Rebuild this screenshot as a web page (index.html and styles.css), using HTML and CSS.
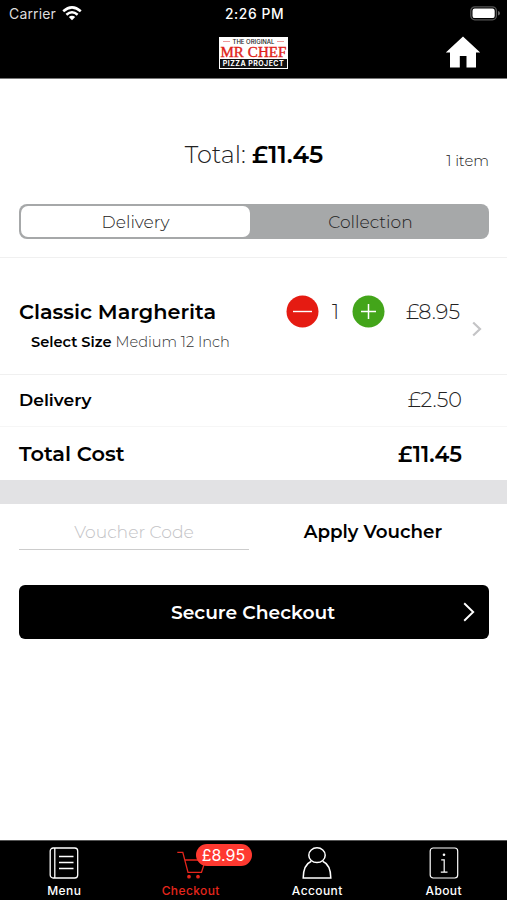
FILE: index.html
```html
<!DOCTYPE html>
<html lang="en">
<head>
<meta charset="utf-8">
<title>Checkout</title>
<link rel="stylesheet" href="styles.css">
</head>
<body>
<div class="app">
  <header class="header">
    <div class="status">
      <div class="carrier"><span>Carrier</span>
        <svg width="20" height="15" viewBox="0 0 20 15" fill="none" stroke="#fff" stroke-width="2.5"><path d="M1.2 5.3Q10-2.6 18.8 5.3M4.4 8.7Q10 3.8 15.6 8.7"/><path d="M6.8 10.9Q10 8.4 13.2 10.9L10 14.2Z" fill="#fff" stroke="none"/></svg>
      </div>
      <span class="time">2:26 PM</span>
      <svg class="battery" width="31" height="15" viewBox="0 0 31 15"><rect x=".8" y=".8" width="25.6" height="13" rx="4" fill="none" stroke="#555" stroke-width="1.3"/><rect x="2.5" y="2.5" width="22.2" height="9.6" rx="2.2" fill="#fff"/><path d="M28 5q2 .5 2 2.3T28 9.6z" fill="#666"/></svg>
    </div>
    <div class="brandbar">
      <div class="logo">
        <div class="logo-top"><i></i><span>THE ORIGINAL</span><i></i></div>
        <div class="logo-mid">MR CHEF</div>
        <div class="logo-bottom">PIZZA PROJECT</div>
      </div>
      <svg class="home" width="36" height="32" viewBox="0 0 36 32" fill="#fff"><path d="M18 .5 35.2 16.5H31V31.5H21.5V20H14.8V31.5H5V16.5H.8Z"/></svg>
    </div>
  </header>

  <main class="main">
    <section class="summary">
      <div class="total-line"><div class="total"><span class="total-label">Total:</span><b>£11.45</b></div><span class="count">1 item</span></div>
      <div class="segmented"><div class="segment selected"><span>Delivery</span></div><div class="segment collection"><span>Collection</span></div></div>
    </section>
    <section class="item">
      <div class="item-info">
        <div class="item-name">Classic Margherita</div>
        <div class="item-option"><b>Select Size</b><span>Medium 12 Inch</span></div>
      </div>
      <div class="stepper">
        <svg width="33" height="33" viewBox="0 0 33 33"><circle cx="16.5" cy="16.5" r="16" fill="#e51b12"/><path d="M7 16.5h19" stroke="#fff" stroke-width="1.4"/></svg>
        <span class="quantity">1</span>
        <svg width="33" height="33" viewBox="0 0 33 33"><circle cx="16.5" cy="16.5" r="16" fill="#43a51a"/><path d="M9 16.5h15M16.5 9v15" stroke="#fff" stroke-width="1.5"/></svg>
      </div>
      <div class="amount light item-amount">£8.95</div>
      <svg class="chevron" width="10" height="16" viewBox="0 0 10 16" fill="none" stroke="#c4c4c6" stroke-width="2.2"><path d="M1.2 1.5 8 8 1.2 14.5"/></svg>
    </section>
    <section class="row row-first"><span class="row-delivery">Delivery</span><span class="amount light">£2.50</span></section>
    <section class="row row-last"><span class="row-total">Total Cost</span><span class="amount total-amount">£11.45</span></section>
    <div class="band"></div>
    <section class="voucher"><div class="voucher-input"><span>Voucher Code</span></div><div class="voucher-apply"><span>Apply Voucher</span></div></section>
    <div class="checkout"><span>Secure Checkout</span><svg width="12" height="20" viewBox="0 0 12 20" fill="none" stroke="#fff" stroke-width="1.9"><path d="M1.2 1.2 10.2 10 1.2 18.8"/></svg></div>
  </main>

  <nav class="tabs">
    <div class="tab">
      <svg width="32" height="34" viewBox="0 0 32 34" fill="none" stroke="#fff" stroke-width="1.3"><rect x="2.2" y="2" width="27.5" height="30" rx="3"/><path d="M6.8 2v30M11 10.5h14.5M11 16.5h14.5M11 22.5h14.5"/></svg>
      <span>Menu</span>
    </div>
    <div class="tab active">
      <svg width="32" height="34" viewBox="0 0 32 34" fill="none" stroke="#e5261c" stroke-width="1.3"><path d="M2.3 6.3h5.5L13 26.3h13.5L30.5 14H9.8"/><circle cx="14" cy="30.7" r="1.2" fill="#e5261c"/><circle cx="23" cy="30.7" r="1.2" fill="#e5261c"/></svg>
      <span>Checkout</span>
      <div class="badge">£8.95</div>
    </div>
    <div class="tab">
      <svg width="32" height="34" viewBox="0 0 32 34" fill="none" stroke="#fff" stroke-width="1.5"><ellipse cx="16" cy="9.2" rx="8.2" ry="7.4"/><path d="M10.3 15.2C5 17.5 2.3 22.5 2.2 32H29.8C29.7 22.5 27 17.5 21.7 15.2"/></svg>
      <span>Account</span>
    </div>
    <div class="tab">
      <svg width="32" height="34" viewBox="0 0 32 34" fill="none" stroke="#fff" stroke-width="1.2"><rect x="2.2" y="2" width="27.5" height="30" rx="3"/><path d="M13.2 13.8h3v12M12.8 26.2h6.7"/><circle cx="16" cy="8.8" r="1.3" fill="#fff" stroke="none"/></svg>
      <span>About</span>
    </div>
  </nav>
</div>
</body>
</html>
```
FILE: styles.css
```css
* { box-sizing: border-box; }
body { margin: 0; background: #fff; }
svg { display: block; flex: none; }
.app {
  width: 507px;
  height: 900px;
  display: flex;
  flex-direction: column;
  font-family: Montserrat, Inter, sans-serif;
  color: #000;
  white-space: nowrap;
  overflow: hidden;
}
.header { height: 79px; background: #000; color: #fff; border-bottom: 1px solid #777; flex: none; }
.status { height: 28px; padding: 0 6px 0 9px; display: grid; grid-template-columns: 1fr auto 1fr; align-items: center; font-family: Inter, sans-serif; font-size: 14px; }
.carrier { display: flex; gap: 6px; align-items: center; letter-spacing: .15px; color: #ddd; }
.carrier span { position: relative; top: -1px; }
.carrier svg { margin-top: -1px; }
.time { font-weight: 500; font-size: 13.8px; letter-spacing: .6px; margin-left: -1px; }
.battery { justify-self: end; margin: -2px 0 0 0; }
.brandbar { display: grid; grid-template-columns: 1fr 69px 1fr; height: 50px; padding: 8px 26px 0; align-items: start; }
.logo { grid-column: 2; height: 32px; background: #fff; border: 1px solid #fff; color: #222; display: flex; flex-direction: column; text-align: center; margin-top: 1px; }
.logo-top { height: 7px; display: flex; align-items: center; justify-content: center; gap: 2px; font: 500 6px/7px Inter, sans-serif; }
.logo-top i { width: 7px; height: 1px; background: #e99; }
.logo-mid { height: 14px; color: #e01f18; font: 15px/14px "Liberation Serif", serif; letter-spacing: .1px; -webkit-text-stroke: .4px #e01f18; }
.logo-bottom { height: 9px; background: #111; color: #fff; font: 700 7px/9px Inter, sans-serif; letter-spacing: .45px; }
.home { grid-column: 3; justify-self: end; margin-top: -.5px; }
.main { flex: 1; min-height: 0; }
.summary { height: 179px; padding: 56px 18px 0 19px; border-bottom: 1px solid #f0f0f0; }
.total-line { display: grid; grid-template-columns: 1fr auto 1fr; height: 40px; line-height: 40px; }
.total { grid-column: 2; font-size: 24px; display: flex; gap: 6px; }
.total-label { font-weight: 300; color: #222; }
.total b { font-weight: 600; font-size: 24.3px; line-height: 39px; }
.count { justify-self: end; font-size: 14.8px; font-weight: 300; line-height: 52px; color: #222; }
.segmented { margin-top: 29px; height: 35px; border-radius: 8px; background: #a6a8a9; padding: 2px; display: flex; }
.segment { flex: 1; display: flex; align-items: center; justify-content: center; font-size: 17.1px; font-weight: 300; border-radius: 7px; color: #222; }
.selected { background: #fff; flex: 0 0 229px; }
.collection { padding-left: 4px; }
.item { height: 117px; border-bottom: 1px solid #f0f0f0; padding: 36px 24px 0 19px; display: flex; }
.item-info { width: 267px; }
.item-name { font-size: 20.8px; line-height: 36px; font-weight: 600; }
.item-option { display: flex; gap: 4px; padding-left: 12px; font-size: 14.6px; line-height: 24px; font-weight: 300; color: #333; }
.item-option b { font-weight: 600; color: #000; }
.stepper { display: flex; width: 99px; height: 35px; align-items: center; justify-content: space-between; }
.quantity { font-size: 20px; font-weight: 300; color: #222; }
.amount { font-size: 20.8px; line-height: 36px; text-align: right; }
.light { font-weight: 300; color: #222; }
.item-amount { width: 75px; }
.chevron { margin: 27px 0 0 12px; }
.row { height: 53px; display: flex; justify-content: space-between; align-items: center; padding: 0 45px 0 19px; border-bottom: 1px solid #f6f6f6; }
.row-first { height: 52px; }
.row-first > span { margin-top: -2px; }
.row-last { border: 0; }
.row-delivery { font-size: 17.2px; font-weight: 600; }
.row-total { font-size: 20.9px; font-weight: 600; }
.total-amount { font-weight: 600; font-size: 21.8px; }
.band { height: 24px; background: #e2e2e4; }
.voucher { display: flex; padding: 10px 19px 0; height: 81px; }
.voucher-input { width: 230px; height: 36px; line-height: 36px; border-bottom: 1px solid #ccc; text-align: center; font-size: 17.2px; font-weight: 300; color: #c2c2c5; }
.voucher-apply { flex: 1; text-align: center; font-size: 18.3px; line-height: 36px; font-weight: 600; padding-left: 9px; }
.checkout { margin: 0 18px 0 19px; height: 54px; border-radius: 6px; background: #000; color: #fff; font-weight: 600; font-size: 18.7px; display: grid; grid-template-columns: 1fr auto 1fr; align-items: center; padding: 0 14px 0 12px; }
.checkout span { grid-column: 2; }
.checkout svg { justify-self: end; }
.tabs { height: 60px; background: #000; color: #fff; display: flex; border-top: 1px solid #555; flex: none; font: 500 12px Inter, sans-serif; padding-left: 1px; }
.tab { width: 126.5px; position: relative; display: flex; flex-direction: column; align-items: center; padding-top: 5px; }
.tab > span { line-height: 16px; margin-top: 3px; letter-spacing: .4px; }
.active { color: #e5261c; }
.badge { position: absolute; left: 68px; top: 3px; width: 56px; height: 22px; border-radius: 11px; background: #ff3930; color: #fff; font-size: 16px; font-weight: 400; line-height: 22px; text-align: center; }
```
